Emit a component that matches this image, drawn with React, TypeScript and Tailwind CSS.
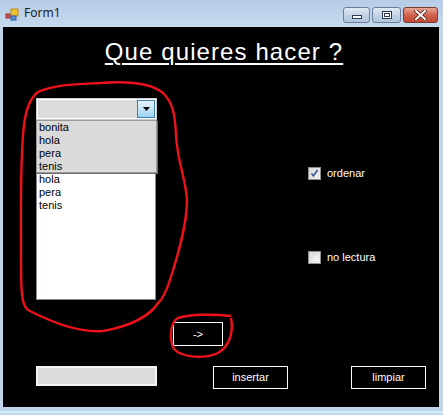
import React from "react";

const ff = { fontFamily: '"Liberation Sans", Arial, sans-serif' };

function CheckBox({ checked, label, className = "" }: { checked?: boolean; label: string; className?: string }) {
  return (
    <div className={`flex items-center ${className}`}>
      <div className="w-[13px] h-[13px] border border-[#8f8f8f] bg-gradient-to-br from-[#d2d4d8] to-[#f7f7f7] p-[1px] relative">
        <div className="w-full h-full border border-[#e0e0e0] bg-gradient-to-br from-[#d8dadd] to-[#fafafa]" />
        {checked && (
          <svg className="absolute left-0 top-0" width="11" height="11" viewBox="0 0 11 11">
            <path d="M2.5 5.5 L4.5 8 L8.5 2" fill="none" stroke="#3b5598" strokeWidth="1.6" />
          </svg>
        )}
      </div>
      <span className="ml-[6px] text-[11px] leading-[13px] text-white" style={ff}>
        {label}
      </span>
    </div>
  );
}

export default function App() {
  return (
    <div className="relative w-[443px] h-[415px] flex flex-col bg-[#c0d5ec] overflow-hidden">
      {/* title bar */}
      <div className="h-[27px] flex items-start bg-gradient-to-b from-[#b6cde6] to-[#c6d9ee]">
        <svg className="ml-[5px] mt-[8px]" width="14" height="13" viewBox="0 0 14 13">
          <rect x="6" y="1" width="7" height="7" fill="#f1c232" stroke="#b58b1b" strokeWidth="1" />
          <rect x="1" y="6" width="4" height="4" fill="#d9534f" stroke="#9c2f2b" strokeWidth="1" />
          <rect x="6" y="8" width="5" height="4" fill="#5b8fd8" stroke="#2e5e9e" strokeWidth="1" />
        </svg>
        <span className="ml-[5px] mt-[6px] text-[12px] leading-[14px] text-[#1b1b1b]" style={{ fontFamily: '"Noto Sans", "Open Sans", sans-serif' }}>
          Form1
        </span>
        <div className="ml-auto mr-[5px] mt-[7px] flex gap-[2px]">
          <div className="w-[27px] h-[16px] rounded-[3px] border border-[#6d7f98] bg-gradient-to-b from-[#e2ebf6] via-[#c3d3e6] to-[#b0c5de] flex items-center justify-center">
            <div className="w-[10px] h-[4px] mt-[4px] border border-[#2b3a52] bg-white" />
          </div>
          <div className="w-[29px] h-[16px] rounded-[3px] border border-[#6d7f98] bg-gradient-to-b from-[#e2ebf6] via-[#c3d3e6] to-[#b0c5de] flex items-center justify-center">
            <div className="w-[10px] h-[8px] border border-[#2b3a52] bg-white p-[1px]">
              <div className="w-full h-full border border-[#2b3a52]" />
            </div>
          </div>
          <div className="w-[35px] h-[16px] rounded-[3px] border border-[#7a3a2e] bg-gradient-to-b from-[#e8a493] via-[#d2634c] to-[#c04a32] flex items-center justify-center">
            <svg width="13" height="10" viewBox="0 0 13 10">
              <path d="M2 1 L11 9 M11 1 L2 9" stroke="#3a1a14" strokeWidth="3.4" strokeLinecap="square" />
              <path d="M2 1 L11 9 M11 1 L2 9" stroke="#ffffff" strokeWidth="2" strokeLinecap="square" />
            </svg>
          </div>
        </div>
      </div>

      {/* client area */}
      <div className="flex-1 ml-[3px] mr-[4px] bg-black flex flex-col">
        <div className="mt-[11px] h-[28px] flex justify-center pl-[6px]">
          <span
            className="text-[24px] leading-[28px] text-white underline decoration-2 underline-offset-[3px] tracking-[1.1px]"
            style={ff}
          >
            Que quieres hacer ?
          </span>
        </div>

        {/* main row */}
        <div className="mt-[32px] flex">
          <div className="ml-[33px] w-[121px] relative">
            {/* combobox */}
            <div className="h-[22px] border border-[#c9ccd1] flex p-[1px] bg-white">
              <div className="flex-1 bg-[#dcdcdc]" />
              <div className="w-[18px] border border-[#3c7fb1] bg-gradient-to-b from-[#e5f4fc] via-[#c4e5f6] to-[#98d1ef] flex items-center justify-center">
                <svg width="7" height="4" viewBox="0 0 7 4">
                  <path d="M0 0 L7 0 L3.5 4 Z" fill="#000" />
                </svg>
              </div>
            </div>
            {/* listbox */}
            <div className="w-[120px] h-[180px] bg-white border border-[#828790] pt-[52px] pl-[2px]">
              {["hola", "pera", "tenis"].map((t) => (
                <div key={t + "l"} className="text-[11px] leading-[13px] text-black" style={ff}>
                  {t}
                </div>
              ))}
            </div>
            {/* dropdown overlay */}
            <div className="absolute left-0 top-[22px] w-[121px] h-[53px] bg-[#dadada] border border-[#9a9a9a] shadow-[1px_1px_0_#6b6b6b] pl-[2px]">
              {["bonita", "hola", "pera", "tenis"].map((t) => (
                <div key={t} className="text-[11px] leading-[13px] text-black" style={ff}>
                  {t}
                </div>
              ))}
            </div>
          </div>
          <div className="ml-[151px] flex flex-col">
            <CheckBox checked label="ordenar" className="mt-[69px]" />
            <CheckBox label="no lectura" className="mt-[71px]" />
          </div>
        </div>

        {/* arrow button */}
        <div className="mt-[22px] ml-[170px]">
          <div className="w-[50px] h-[24px] border border-white flex items-center justify-center text-white text-[11px]" style={ff}>
            -&gt;
          </div>
        </div>

        {/* bottom row */}
        <div className="mt-[20px] flex items-start">
          <div className="ml-[33px] w-[121px] h-[20px] border-2 border-[#f4f4f4] bg-[#dcdcdc]" />
          <div className="ml-[56px] w-[75px] h-[23px] border border-white flex items-center justify-center text-white text-[11px]" style={ff}>
            insertar
          </div>
          <div className="ml-[63px] w-[75px] h-[23px] border border-white flex items-center justify-center text-white text-[11px]" style={ff}>
            limpiar
          </div>
        </div>
      </div>

      {/* bottom frame */}
      <div className="h-[8px] flex flex-col">
        <div className="h-[4px]" />
        <div className="h-[2px] bg-[#d3ecfa]" />
      </div>

      {/* red annotations */}
      <svg className="absolute left-0 top-0 pointer-events-none" width="443" height="415" viewBox="0 0 443 415">
        <path
          d="M100 83 C125 81 150 82 163 93 C172 102 175 112 176 135 C177 160 186 180 187 200 C187 225 178 255 170 280 C166 292 162 300 158 303 C150 316 130 326 103 331 C80 333 55 324 28 310 C21 305 21 290 21 250 C21 200 20 160 24 125 C26 108 30 98 38 92 C55 84 80 84 100 83"
          fill="none"
          stroke="#ee1119"
          strokeWidth="2.4"
        />
        <path
          d="M231 316 C215 314 190 314 178 318 C170 322 169 340 174 349 C182 358 205 359 218 353 C229 347 234 332 231 318"
          fill="none"
          stroke="#ee1119"
          strokeWidth="2.4"
        />
      </svg>
    </div>
  );
}
